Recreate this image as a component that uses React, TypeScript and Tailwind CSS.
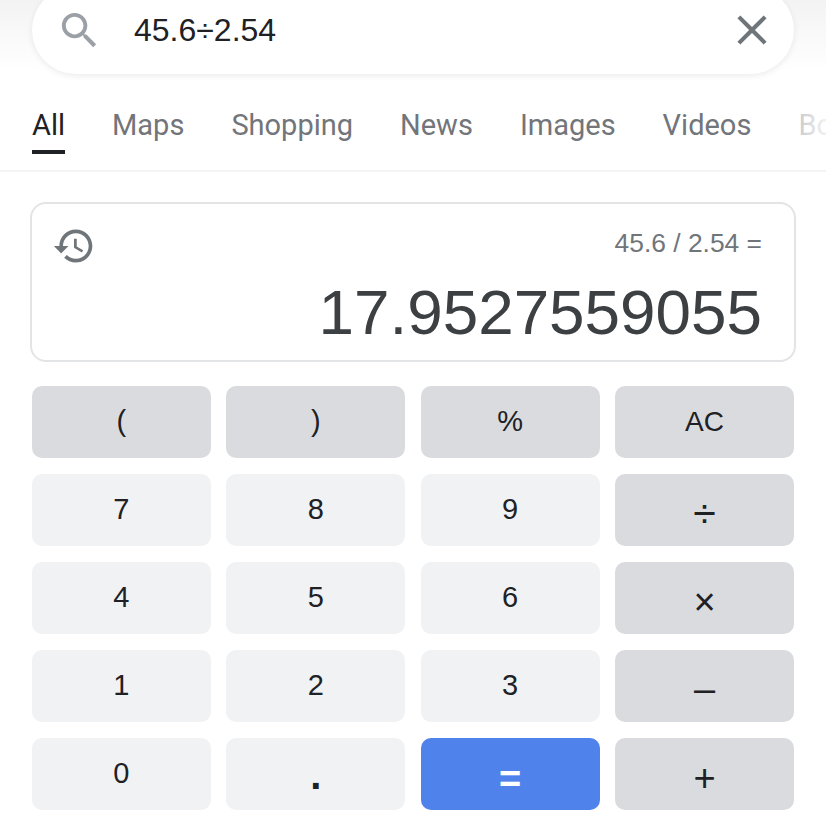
const tabs = ["Maps", "Shopping", "News", "Images", "Videos", "Books"];

const dark = "bg-[#dadbde]";
const light = "bg-[#f1f2f4]";

type Key = { label: string; cls: string; text?: string };

const keys: Key[] = [
  { label: "(", cls: dark },
  { label: ")", cls: dark },
  { label: "%", cls: dark },
  { label: "AC", cls: dark, text: "text-[28px]" },
  { label: "7", cls: light },
  { label: "8", cls: light },
  { label: "9", cls: light },
  { label: "÷", cls: dark, text: "pt-[8px] text-[41px]" },
  { label: "4", cls: light },
  { label: "5", cls: light },
  { label: "6", cls: light },
  { label: "×", cls: dark, text: "pt-[8px] text-[38px]" },
  { label: "1", cls: light },
  { label: "2", cls: light },
  { label: "3", cls: light },
  { label: "–", cls: dark, text: "pt-[6px] text-[38px]" },
  { label: "0", cls: light },
  { label: ".", cls: light, text: "pt-[2px] text-[40px] font-bold" },
  { label: "=", cls: "bg-[#4f82ea]", text: "pt-[10px] text-[38px] font-bold text-white" },
  { label: "+", cls: dark, text: "pt-[8px] text-[38px]" },
];

export default function App() {
  return (
    <div className="h-[829px] w-[826px] overflow-hidden bg-white font-['Liberation_Sans',sans-serif]">
      <header className="flex h-[172px] flex-col border-b-2 border-[#f4f4f4] bg-gradient-to-b from-[#f3f3f3] to-white to-[70px]">
        <div className="mx-[32px] -mt-[14px] flex h-[88px] shrink-0 items-center rounded-[44px] bg-white shadow-[0_2px_6px_rgba(0,0,0,0.08)]">
          <svg viewBox="0 0 24 24" className="ml-[24px] h-[47px] w-[47px] fill-[#9aa0a6]">
            <path d="M15.5 14h-.79l-.28-.27C15.41 12.59 16 11.11 16 9.5 16 5.91 13.09 3 9.5 3S3 5.91 3 9.5 5.91 16 9.5 16c1.61 0 3.09-.59 4.23-1.57l.27.28v.79l5 4.99L20.49 19l-4.99-5zm-6 0C7.01 14 5 11.99 5 9.5S7.01 5 9.5 5 14 7.01 14 9.5 11.99 14 9.5 14z" />
          </svg>
          <span className="ml-[31px] flex-1 text-[32px] text-[#202124]">45.6÷2.54</span>
          <svg viewBox="0 0 24 24" className="mr-[17px] h-[50px] w-[50px] fill-[#70757a]">
            <path d="M19 6.41L17.59 5 12 10.59 6.41 5 5 6.41 10.59 12 5 17.59 6.41 19 12 13.41 17.59 19 19 17.59 13.41 12z" />
          </svg>
        </div>
        <nav className="relative mt-[26px] flex gap-[47px] overflow-hidden pl-[32px] font-['Roboto',sans-serif] text-[29px] leading-[50px] text-[#72757a]">
          <span className="relative h-[54px] shrink-0 border-b-4 border-[#202124] text-[#202124]">All</span>
          {tabs.map((t) => (
            <span key={t} className="shrink-0">
              {t}
            </span>
          ))}
          <div className="absolute inset-y-0 right-0 w-[40px] bg-gradient-to-r from-white/50 to-white/90" />
        </nav>
      </header>
      <section className="mx-[30px] mt-[30px] flex h-[160px] flex-col rounded-[16px] border-2 border-[#e3e4e6] pr-[32px]">
        <div className="flex items-start justify-between">
          <svg viewBox="0 0 24 24" className="ml-[20px] mt-[20px] h-[44px] w-[44px] fill-[#70757a]">
            <path d="M13 3c-4.97 0-9 4.03-9 9H1l3.89 3.89.07.14L9 12H6c0-3.87 3.13-7 7-7s7 3.13 7 7-3.13 7-7 7c-1.93 0-3.68-.79-4.94-2.06l-1.42 1.42C8.27 19.99 10.51 21 13 21c4.97 0 9-4.03 9-9s-4.03-9-9-9zm-1 5v5l4.28 2.54.72-1.21-3.5-2.08V8H12z" />
          </svg>
          <span className="mt-[24px] text-[26.4px] leading-[30px] text-[#70757a]">45.6 / 2.54 =</span>
        </div>
        <div className="mt-[6px] text-right text-[63.8px] leading-[76px] text-[#3c4043]">17.9527559055</div>
      </section>
      <section className="mt-[24px] grid grid-cols-4 gap-x-[15.5px] gap-y-[16px] px-[32px]">
        {keys.map((k) => (
          <div
            key={k.label}
            className={`flex h-[72px] items-center justify-center rounded-[10px] text-[#202124] ${k.cls} ${k.text ?? "text-[29px]"}`}
          >
            {k.label}
          </div>
        ))}
      </section>
    </div>
  );
}
